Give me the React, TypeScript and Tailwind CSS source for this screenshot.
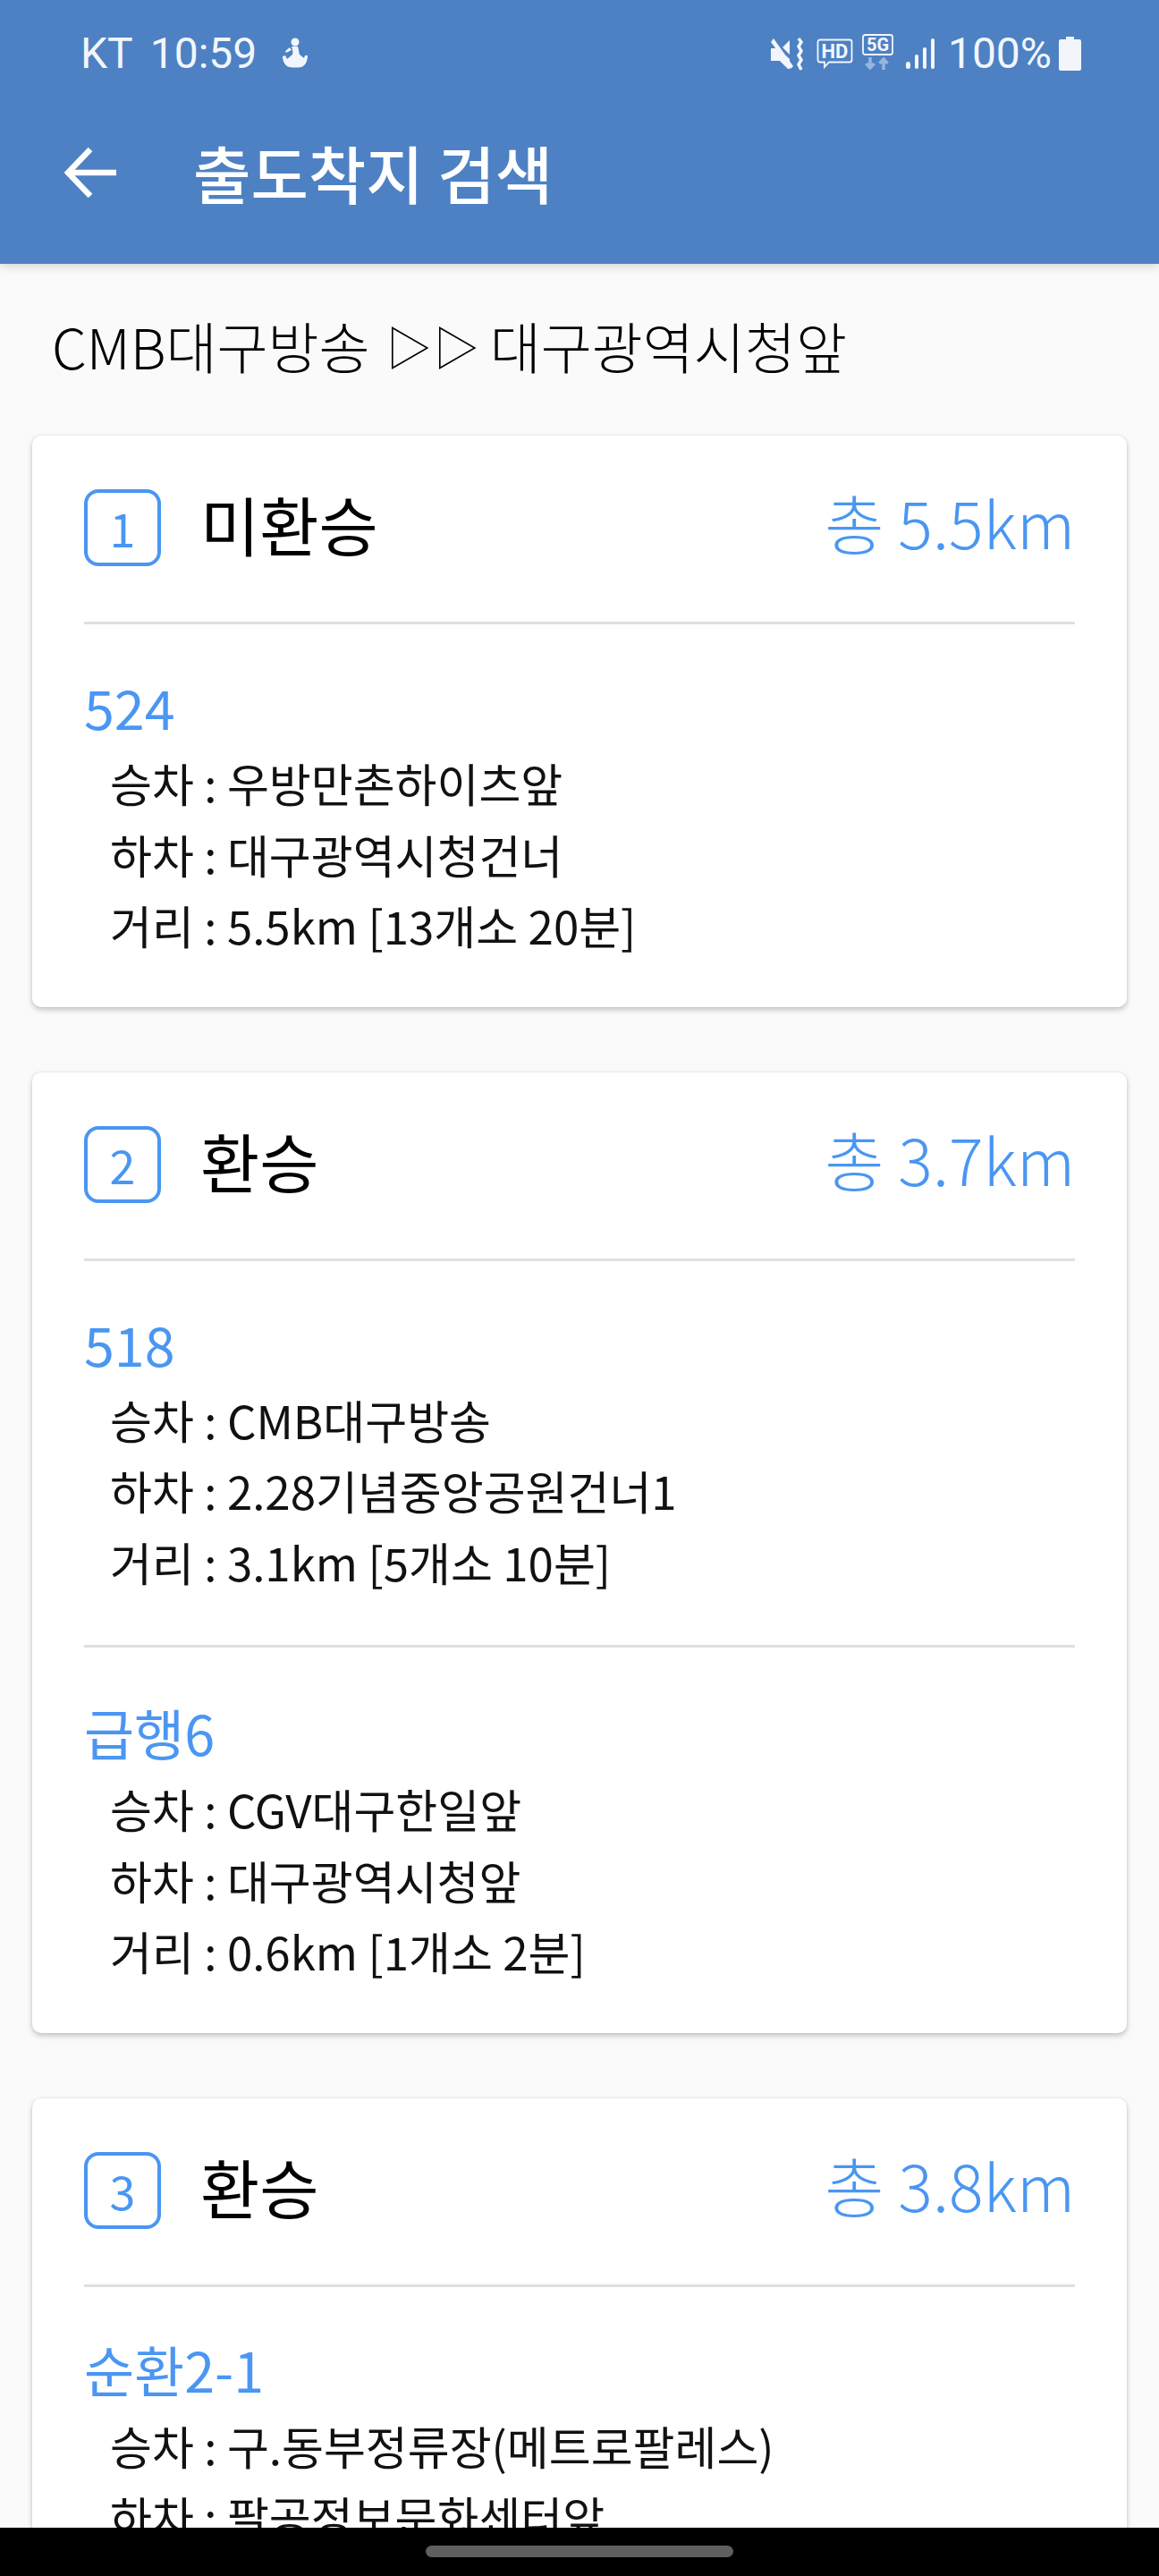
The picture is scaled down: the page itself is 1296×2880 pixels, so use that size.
const kr = "font-['Noto_Sans_CJK_KR','Noto_Sans',sans-serif]"

interface Leg {
  bus: string
  board: string
  alight: string
  dist: string
}

interface Route {
  no: number
  title: string
  total: string
  legs: Leg[]
}

const routes: Route[] = [
  {
    no: 1,
    title: '미환승',
    total: '총 5.5km',
    legs: [{ bus: '524', board: '우방만촌하이츠앞', alight: '대구광역시청건너', dist: '5.5km [13개소 20분]' }],
  },
  {
    no: 2,
    title: '환승',
    total: '총 3.7km',
    legs: [
      { bus: '518', board: 'CMB대구방송', alight: '2.28기념중앙공원건너1', dist: '3.1km [5개소 10분]' },
      { bus: '급행6', board: 'CGV대구한일앞', alight: '대구광역시청앞', dist: '0.6km [1개소 2분]' },
    ],
  },
  {
    no: 3,
    title: '환승',
    total: '총 3.8km',
    legs: [{ bus: '순환2-1', board: '구.동부정류장(메트로팔레스)', alight: '팔공정보문화센터앞', dist: '' }],
  },
]

function StatusBar() {
  return (
    <div className="flex h-[118px] items-center justify-between pl-[90px] pr-[87px] pt-[1px] font-['Roboto',sans-serif] text-[48px] leading-none text-[#f2f6fc]">
      <div className="flex items-center">
        <span>KT</span>
        <span className="ml-[19px]">10:59</span>
        {/* pedometer figure */}
        <svg viewBox="0 0 32 36" className="ml-[26px] h-[36px] w-[32px]" fill="currentColor">
          <circle cx="17" cy="5" r="4.5" />
          <path d="M13 10h7c1 3 1 6 2 9l5 4 1-3h3c0 5-2 10-5 12-3 2-14 2-18 0-3-2-5-7-5-11l3-1 2 4 6-5c1-3 0-6-1-9z" />
          <path d="M11 11L6 15l1 2 6-3z" />
        </svg>
      </div>
      <div className="flex items-center">
        {/* mute + vibrate */}
        <svg viewBox="0 0 38 38" className="h-[38px] w-[38px]" fill="currentColor">
          <path d="M1 13h8l13 12v11h-2L11 27H1z" />
          <path d="M1 6l3-4 22 31-3 3z" />
          <path d="M14 12l8-8v16z" />
          <path d="M32 2l3 4-3 5 3 5-3 5 3 5-3 5 3 6" fill="none" stroke="currentColor" strokeWidth="3.5" />
        </svg>
        {/* HD bubble */}
        <svg viewBox="0 0 41 34" className="ml-[14px] h-[34px] w-[41px]">
          <path d="M4 1.5h33a2.5 2.5 0 0 1 2.5 2.5v20a2.5 2.5 0 0 1-2.5 2.5H14l-5 5.5v-5.500H4A2.500 2.500 0 0 1 1.500 24V4A2.500 2.500 0 0 1 4 1.500z" fill="none" stroke="currentColor" strokeWidth="1.800" />
          <text x="20.500" y="22" textAnchor="middle" fontSize="22" fontWeight="700" fill="currentColor" fontFamily="Roboto">HD</text>
        </svg>
        {/* 5G with data arrows */}
        <svg viewBox="0 0 35 42" className="ml-[10px] mt-[-2px] h-[42px] w-[35px]">
          <rect x="1" y="1" width="33" height="22" rx="2.500" fill="none" stroke="currentColor" strokeWidth="1.800" />
          <text x="17.500" y="19" textAnchor="middle" fontSize="20" fontWeight="700" fill="currentColor" fontFamily="Roboto">5G</text>
          <path d="M9 26v11M4.500 33l4.500 5 4.500-5M24 40V29M19.500 33l4.500-5 4.500 5" fill="none" stroke="currentColor" strokeOpacity="0.450" strokeWidth="3.500" />
        </svg>
        {/* signal */}
        <svg viewBox="0 0 33 36" className="ml-[14px] h-[36px] w-[33px]" fill="currentColor">
          <rect x="0" y="27" width="5" height="8" rx="2.500" />
          <rect x="10" y="19" width="4" height="16" rx="2" />
          <rect x="19" y="11" width="4" height="24" rx="2" />
          <rect x="28" y="1" width="4" height="34" rx="2" />
        </svg>
        <span className="ml-[14px]">100%</span>
        <svg viewBox="0 0 25 38" className="ml-[8px] h-[38px] w-[25px]" fill="currentColor">
          <path d="M8 0h9v3h6a2 2 0 0 1 2 2v31a2 2 0 0 1-2 2H2a2 2 0 0 1-2-2V5a2 2 0 0 1 2-2h6z" />
        </svg>
      </div>
    </div>
  )
}

function Leg({ leg, divided }: { leg: Leg; divided: boolean }) {
  return (
    <div className={divided ? 'mt-[53px] border-t-[3px] border-[#e0e0e0] pt-[55px]' : 'pt-[52px]'}>
      <div className="h-[80px] text-[61px] leading-[80px] text-[#4a96f2]">{leg.bus}</div>
      <div className="mt-[6px] pl-[29px] text-[51px] leading-[79.500px] text-[#111]">
        <div>승차 : {leg.board}</div>
        <div>하차 : {leg.alight}</div>
        {leg.dist && <div>거리 : {leg.dist}</div>}
      </div>
    </div>
  )
}

function RouteCard({ route }: { route: Route }) {
  return (
    <div className="mx-[36px] mb-[73px] rounded-[10px] bg-white px-[58px] pb-[51px] shadow-[0_3px_6px_rgba(0,0,0,0.22),0_0_3px_rgba(0,0,0,0.08)]">
      <div className="flex h-[211px] items-start border-b-[3px] border-[#e0e0e0] pt-[60px]">
        <div className="flex h-[86px] w-[86px] items-center justify-center rounded-[16px] border-[4px] border-[#4a96f2] text-[52px] leading-none text-[#4a96f2]">
          {route.no}
        </div>
        <div className="ml-[44px] h-[86px] text-[72px] leading-[76px] text-black">{route.title}</div>
        <div className="ml-auto h-[86px] text-[72px] font-light leading-[71px] text-[#4a96f2]">{route.total}</div>
      </div>
      {route.legs.map((leg, i) => (
        <Leg key={leg.bus} leg={leg} divided={i > 0} />
      ))}
    </div>
  )
}

export default function App() {
  return (
    <div className={`relative h-[2880px] w-[1296px] overflow-hidden bg-[#fafafa] ${kr}`}>
      {/* Header */}
      <div className="relative z-10 h-[295px] bg-[#4d81c3] shadow-[0_3px_10px_rgba(0,0,0,0.15)]">
        <StatusBar />
        <div className="flex h-[154px] items-center pl-[72px] pb-[4px] text-white">
          <svg viewBox="0 0 58 58" className="h-[58px] w-[58px]" fill="none" stroke="currentColor" strokeWidth="6.500">
            <path d="M58 29H5M29 3L4 29l25 26" />
          </svg>
          <span className="ml-[86px] text-[70px] font-medium leading-none">출도착지 검색</span>
        </div>
      </div>

      <div className="flex h-[192px] items-center pb-[10px] pl-[58px] text-[62px] font-light leading-none text-black">
        CMB대구방송 <span className="ml-[18px] mr-[10px] text-[51px] tracking-[2px]">▷▷</span> 대구광역시청앞
      </div>

      {routes.map(route => (
        <RouteCard key={route.no} route={route} />
      ))}

      {/* Nav bar */}
      <div className="absolute inset-x-0 bottom-0 flex h-[54px] items-start justify-center bg-black pt-[20px]">
        <div className="h-[13px] w-[344px] rounded-full bg-[#5f5f5f]" />
      </div>
    </div>
  )
}
